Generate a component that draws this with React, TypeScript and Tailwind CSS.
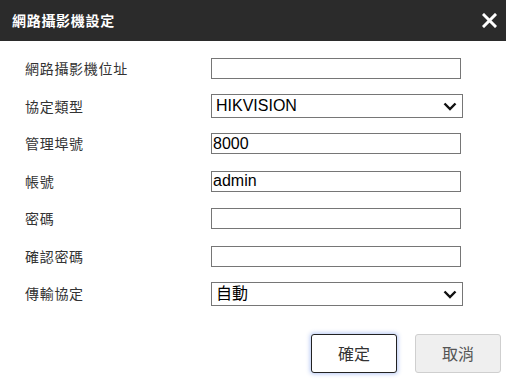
import React from "react";

const cjk = { fontFamily: '"Noto Sans CJK TC", "Noto Sans CJK SC", sans-serif' };
const mixed = { fontFamily: '"Liberation Sans", "Noto Sans CJK TC", sans-serif' };

function Chevron() {
  return (
    <svg width="14" height="10" viewBox="0 0 14 10" className="absolute right-[5px] top-1/2 -translate-y-1/2">
      <path d="M1.5 2.5 L7 8 L12.5 2.5" fill="none" stroke="#111" strokeWidth="2.4" strokeLinecap="butt" />
    </svg>
  );
}

function Field({ kind, value }: { kind: "input" | "select"; value?: string }) {
  if (kind === "select") {
    return (
      <div
        className="relative w-[252px] h-[24px] border border-[#767676] bg-white flex items-center pl-[4px] text-[16px] text-black leading-none"
        style={mixed}
      >
        {value}
        <Chevron />
      </div>
    );
  }
  return (
    <div
      className="w-[250px] h-[21px] border border-[#767676] bg-white flex items-center pl-[1px] text-[16px] text-black leading-none"
      style={mixed}
    >
      {value}
    </div>
  );
}

const rows: { label: string; kind: "input" | "select"; value?: string }[] = [
  { label: "網路攝影機位址", kind: "input" },
  { label: "協定類型", kind: "select", value: "HIKVISION" },
  { label: "管理埠號", kind: "input", value: "8000" },
  { label: "帳號", kind: "input", value: "admin" },
  { label: "密碼", kind: "input" },
  { label: "確認密碼", kind: "input" },
  { label: "傳輸協定", kind: "select", value: "自動" },
];

export default function App() {
  return (
    <div className="w-[506px] h-[382px] bg-white overflow-hidden flex flex-col">
      <div className="h-[41px] bg-[#2b2b2b] flex items-center justify-between pl-[12px] pr-[9px] shrink-0">
        <span className="text-white text-[14px] font-bold tracking-[0.7px]" style={cjk}>
          網路攝影機設定
        </span>
        <svg width="15" height="15" viewBox="0 0 15 15">
          <path d="M2 2 L13 13 M13 2 L2 13" stroke="#fff" strokeWidth="3" strokeLinecap="square" />
        </svg>
      </div>
      <div className="pt-[9px] flex flex-col">
        {rows.map((r) => (
          <div key={r.label} className="h-[37.5px] flex items-center">
            <div className="w-[211px] pl-[25px] text-[14px] tracking-[0.7px] text-[#333]" style={cjk}>
              {r.label}
            </div>
            <Field kind={r.kind} value={r.value} />
          </div>
        ))}
      </div>
      <div className="flex justify-end gap-[18px] pr-[5px] pt-[21px]">
        <button
          className="w-[86px] h-[39px] border border-[#222] rounded-[3px] bg-white text-[16px] text-[#333] shadow-[0_0_4px_1px_rgba(90,130,230,0.45)]"
          style={cjk}
        >
          確定
        </button>
        <button
          className="w-[86px] h-[39px] border border-[#cfcfcf] rounded-[3px] bg-[#efefef] text-[16px] text-[#555]"
          style={cjk}
        >
          取消
        </button>
      </div>
    </div>
  );
}
